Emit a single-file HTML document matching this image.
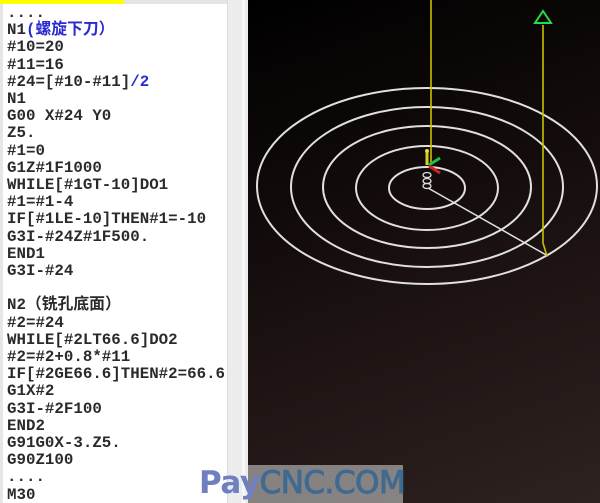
<!DOCTYPE html>
<html><head><meta charset="utf-8"><style>
html,body{margin:0;padding:0;width:600px;height:503px;overflow:hidden;background:#fff;position:relative}
#left{position:absolute;left:0;top:0;width:227px;height:503px;background:#fff;border-left:3px solid #e6e6e6;box-sizing:border-box}
#topbar{position:absolute;left:0;top:0;width:227px;height:4px;background:#e4e4e4}
#yb{position:absolute;left:0;top:0;width:124px;height:4px;background:#ffff00}
#code{position:absolute;left:7px;top:5px;font-family:"Liberation Mono","Noto Sans CJK SC",monospace;font-weight:bold;font-size:15.8px;line-height:17.2px;color:#2a2a2a;white-space:pre}
.b{color:#2a2ad0}
#strip{position:absolute;left:227px;top:0;width:21px;height:503px;background:#ececec;border-left:1px solid #dcdcdc;box-sizing:border-box}
#strip div{position:absolute;left:14px;top:0;width:3px;height:503px;background:#f7f7f7}
#view{position:absolute;left:248px;top:0;width:352px;height:503px;background:linear-gradient(160deg,#000 0%,#140c0c 40%,#2e2220 100%)}
#wm{position:absolute;left:248px;top:465px;width:155px;height:38px;background:rgba(200,200,200,0.6)}
#wmt{position:absolute;left:199px;top:463px;font-family:"DejaVu Sans","Liberation Sans",sans-serif;font-size:31px;letter-spacing:-0.5px;line-height:40px}
</style></head><body>
<div id="left"></div>
<div id="topbar"></div><div id="yb"></div>
<div id="code">....
N1<span class="b">(螺旋下刀）</span>
#10=20
#11=16
#24=[#10-#11]<span class="b">/2</span>
N1
G00 X#24 Y0
Z5.
#1=0
G1Z#1F1000
WHILE[#1GT-10]DO1
#1=#1-4
IF[#1LE-10]THEN#1=-10
G3I-#24Z#1F500.
END1
G3I-#24

N2（铣孔底面）
#2=#24
WHILE[#2LT66.6]DO2
#2=#2+0.8*#11
IF[#2GE66.6]THEN#2=66.6
G1X#2
G3I-#2F100
END2
G91G0X-3.Z5.
G90Z100
....
M30</div>
<div id="strip"><div></div></div>
<div id="view">
<svg width="352" height="503" viewBox="248 0 352 503" xmlns="http://www.w3.org/2000/svg">
<g fill="none" stroke="#e0e0e0" stroke-width="2">
<ellipse cx="427" cy="186" rx="170" ry="98"/>
<ellipse cx="427" cy="187" rx="136" ry="80"/>
<ellipse cx="427" cy="187" rx="104" ry="61"/>
<ellipse cx="427" cy="188" rx="71" ry="42"/>
<ellipse cx="427" cy="188" rx="38" ry="21"/>
<line x1="428" y1="188" x2="548" y2="256" stroke-width="1.5"/>
<ellipse cx="427" cy="175" rx="4" ry="2.5" stroke-width="1.3"/>
<ellipse cx="427" cy="181" rx="4" ry="2.5" stroke-width="1.3"/>
<ellipse cx="427" cy="186" rx="4" ry="2.5" stroke-width="1.3"/>
</g>
<g stroke="#c8c000" stroke-width="1.6" fill="none">
<line x1="431" y1="0" x2="431" y2="165"/>
<polyline points="543,25 543,243 547,256"/>
</g>
<polygon points="543,11 535,23 551,23" fill="none" stroke="#22dd44" stroke-width="2"/>
<line x1="427" y1="165" x2="427" y2="152" stroke="#d8d020" stroke-width="3"/>
<circle cx="427" cy="151" r="2" fill="#e8e030"/>
<line x1="429" y1="165" x2="440" y2="158" stroke="#20c040" stroke-width="3"/>
<line x1="429" y1="166" x2="440" y2="173" stroke="#d02020" stroke-width="3"/>
</svg>
</div>
<div id="wm"></div>
<div id="wmt"><span style="color:#6f7fbf;font-weight:bold">Pay</span><span style="color:#3f6a92;-webkit-text-stroke:1px #3f6a92">CNC.COM</span></div>
</body></html>
